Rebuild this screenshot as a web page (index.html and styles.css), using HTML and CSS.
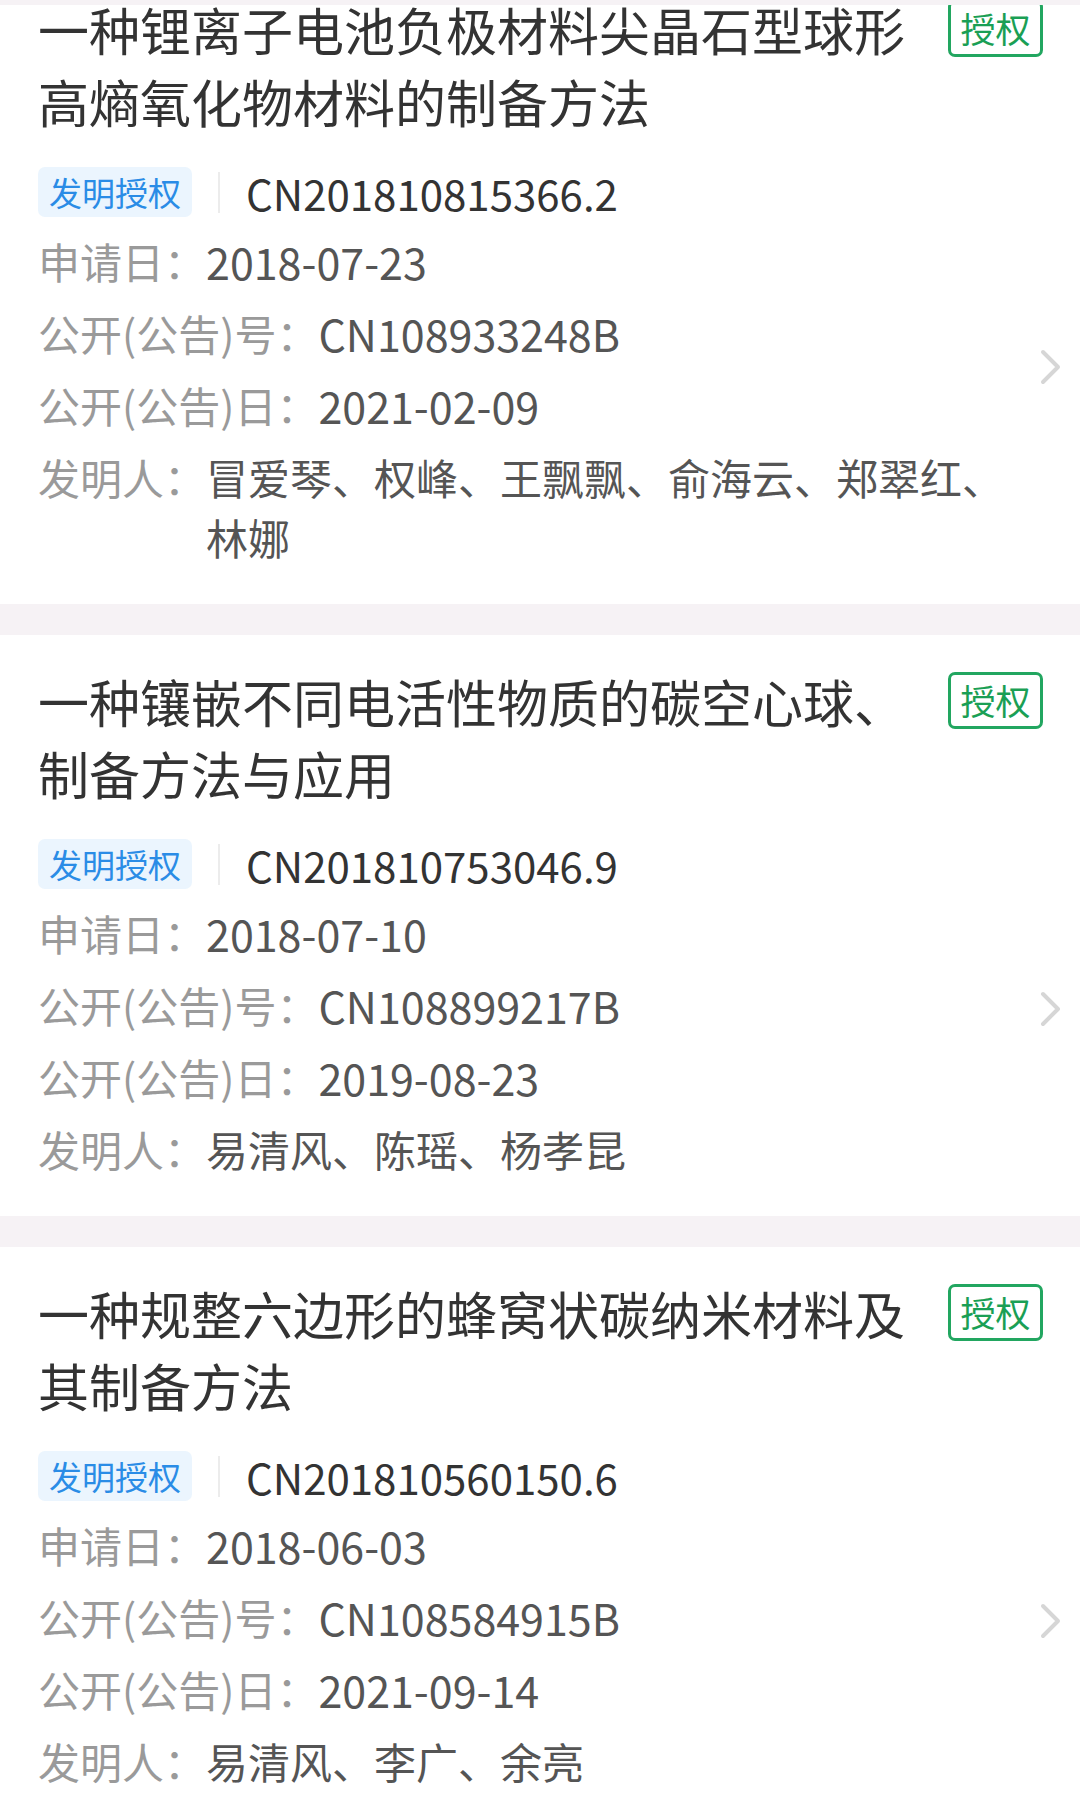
FILE: index.html
```html
<html>
    <head>
        <meta name="viewport" content="width=device-width, initial-scale=1.0">
        <link rel="stylesheet" href="styles.css">
    </head>
    <body>
        <div class="viewport">
            <div class="list">

                <div class="card">
                    <div class="head">
                        <div class="title">一种锂离子电池负极材料尖晶石型球形高熵氧化物材料的制备方法</div>
                        <span class="status">授权</span>
                    </div>
                    <div class="body">
                        <div class="info">
                            <div class="code-row">
                                <span class="type">发明授权</span>
                                <span class="sep"></span>
                                <span class="code">CN201810815366.2</span>
                            </div>
                            <div class="row"><span class="label">申请日：</span><span class="value num">2018-07-23</span></div>
                            <div class="row"><span class="label">公开(公告)号：</span><span class="value num">CN108933248B</span></div>
                            <div class="row"><span class="label">公开(公告)日：</span><span class="value num">2021-02-09</span></div>
                            <div class="row"><span class="label">发明人：</span><span class="value">冒爱琴、权峰、王飘飘、俞海云、郑翠红、林娜</span></div>
                        </div>
                        <svg class="arrow" viewBox="0 0 22 36"><polyline points="3,3 18,18 3,33" /></svg>
                    </div>
                </div>

                <div class="card">
                    <div class="head">
                        <div class="title">一种镶嵌不同电活性物质的碳空心球、制备方法与应用</div>
                        <span class="status">授权</span>
                    </div>
                    <div class="body">
                        <div class="info">
                            <div class="code-row">
                                <span class="type">发明授权</span>
                                <span class="sep"></span>
                                <span class="code">CN201810753046.9</span>
                            </div>
                            <div class="row"><span class="label">申请日：</span><span class="value num">2018-07-10</span></div>
                            <div class="row"><span class="label">公开(公告)号：</span><span class="value num">CN108899217B</span></div>
                            <div class="row"><span class="label">公开(公告)日：</span><span class="value num">2019-08-23</span></div>
                            <div class="row"><span class="label">发明人：</span><span class="value">易清风、陈瑶、杨孝昆</span></div>
                        </div>
                        <svg class="arrow" viewBox="0 0 22 36"><polyline points="3,3 18,18 3,33" /></svg>
                    </div>
                </div>

                <div class="card">
                    <div class="head">
                        <div class="title">一种规整六边形的蜂窝状碳纳米材料及其制备方法</div>
                        <span class="status">授权</span>
                    </div>
                    <div class="body">
                        <div class="info">
                            <div class="code-row">
                                <span class="type">发明授权</span>
                                <span class="sep"></span>
                                <span class="code">CN201810560150.6</span>
                            </div>
                            <div class="row"><span class="label">申请日：</span><span class="value num">2018-06-03</span></div>
                            <div class="row"><span class="label">公开(公告)号：</span><span class="value num">CN108584915B</span></div>
                            <div class="row"><span class="label">公开(公告)日：</span><span class="value num">2021-09-14</span></div>
                            <div class="row"><span class="label">发明人：</span><span class="value">易清风、李广、余亮</span></div>
                        </div>
                        <svg class="arrow" viewBox="0 0 22 36"><polyline points="3,3 18,18 3,33" /></svg>
                    </div>
                </div>

            </div>
        </div>
    </body>
</html>
```

FILE: styles.css
```css
body{
    margin: 0;
    padding-top: 5px;
    background: #f6f2f5;
    font-family: "Noto Sans CJK SC", "Noto Sans", sans-serif;
}
.viewport{
    height: 1789px;
    overflow: hidden;
}
.list{
    margin-top: -42px;
    display: flex;
    flex-direction: column;
    gap: 31px;
}
.card{
    background: #fff;
    padding: 30px 18px 37px 38px;
}
.head{
    display: flex;
    align-items: flex-start;
    gap: 30px;
    padding-right: 19px;
}
.title{
    flex: 1;
    font-size: 51px;
    line-height: 72px;
    color: #333;
}
.status{
    margin-top: 7px;
    flex-shrink: 0;
    width: 95px;
    height: 57px;
    box-sizing: border-box;
    border: 3px solid #22a660;
    border-radius: 7px;
    color: #1a9f55;
    font-size: 35px;
    line-height: 50px;
    text-align: center;
}
.body{
    display: flex;
    align-items: center;
    gap: 30px;
    margin-top: 30px;
}
.info{
    flex: 1;
}
.code-row{
    display: flex;
    align-items: center;
    height: 50px;
    margin-bottom: 14px;
}
.type{
    background: #ebf5fe;
    color: #2a8ce6;
    font-size: 33px;
    line-height: 50px;
    padding: 0 11px;
    border-radius: 7px;
}
.sep{
    width: 2px;
    height: 41px;
    background: #ececec;
    margin: 0 26px;
}
.code{
    font-size: 42px;
    color: #333;
}
.row{
    display: flex;
    font-size: 42px;
    line-height: 60px;
    margin-top: 12px;
}
.code-row + .row{
    margin-top: 0;
}
.label{
    flex-shrink: 0;
    color: #9a9a9a;
}
.value{
    color: #555;
}
.num{
    font-size: 43px;
}
.arrow{
    flex-shrink: 0;
    width: 22px;
    height: 36px;
}
.arrow polyline{
    fill: none;
    stroke: #d6d6d6;
    stroke-width: 4;
    stroke-linecap: round;
    stroke-linejoin: round;
}
```
